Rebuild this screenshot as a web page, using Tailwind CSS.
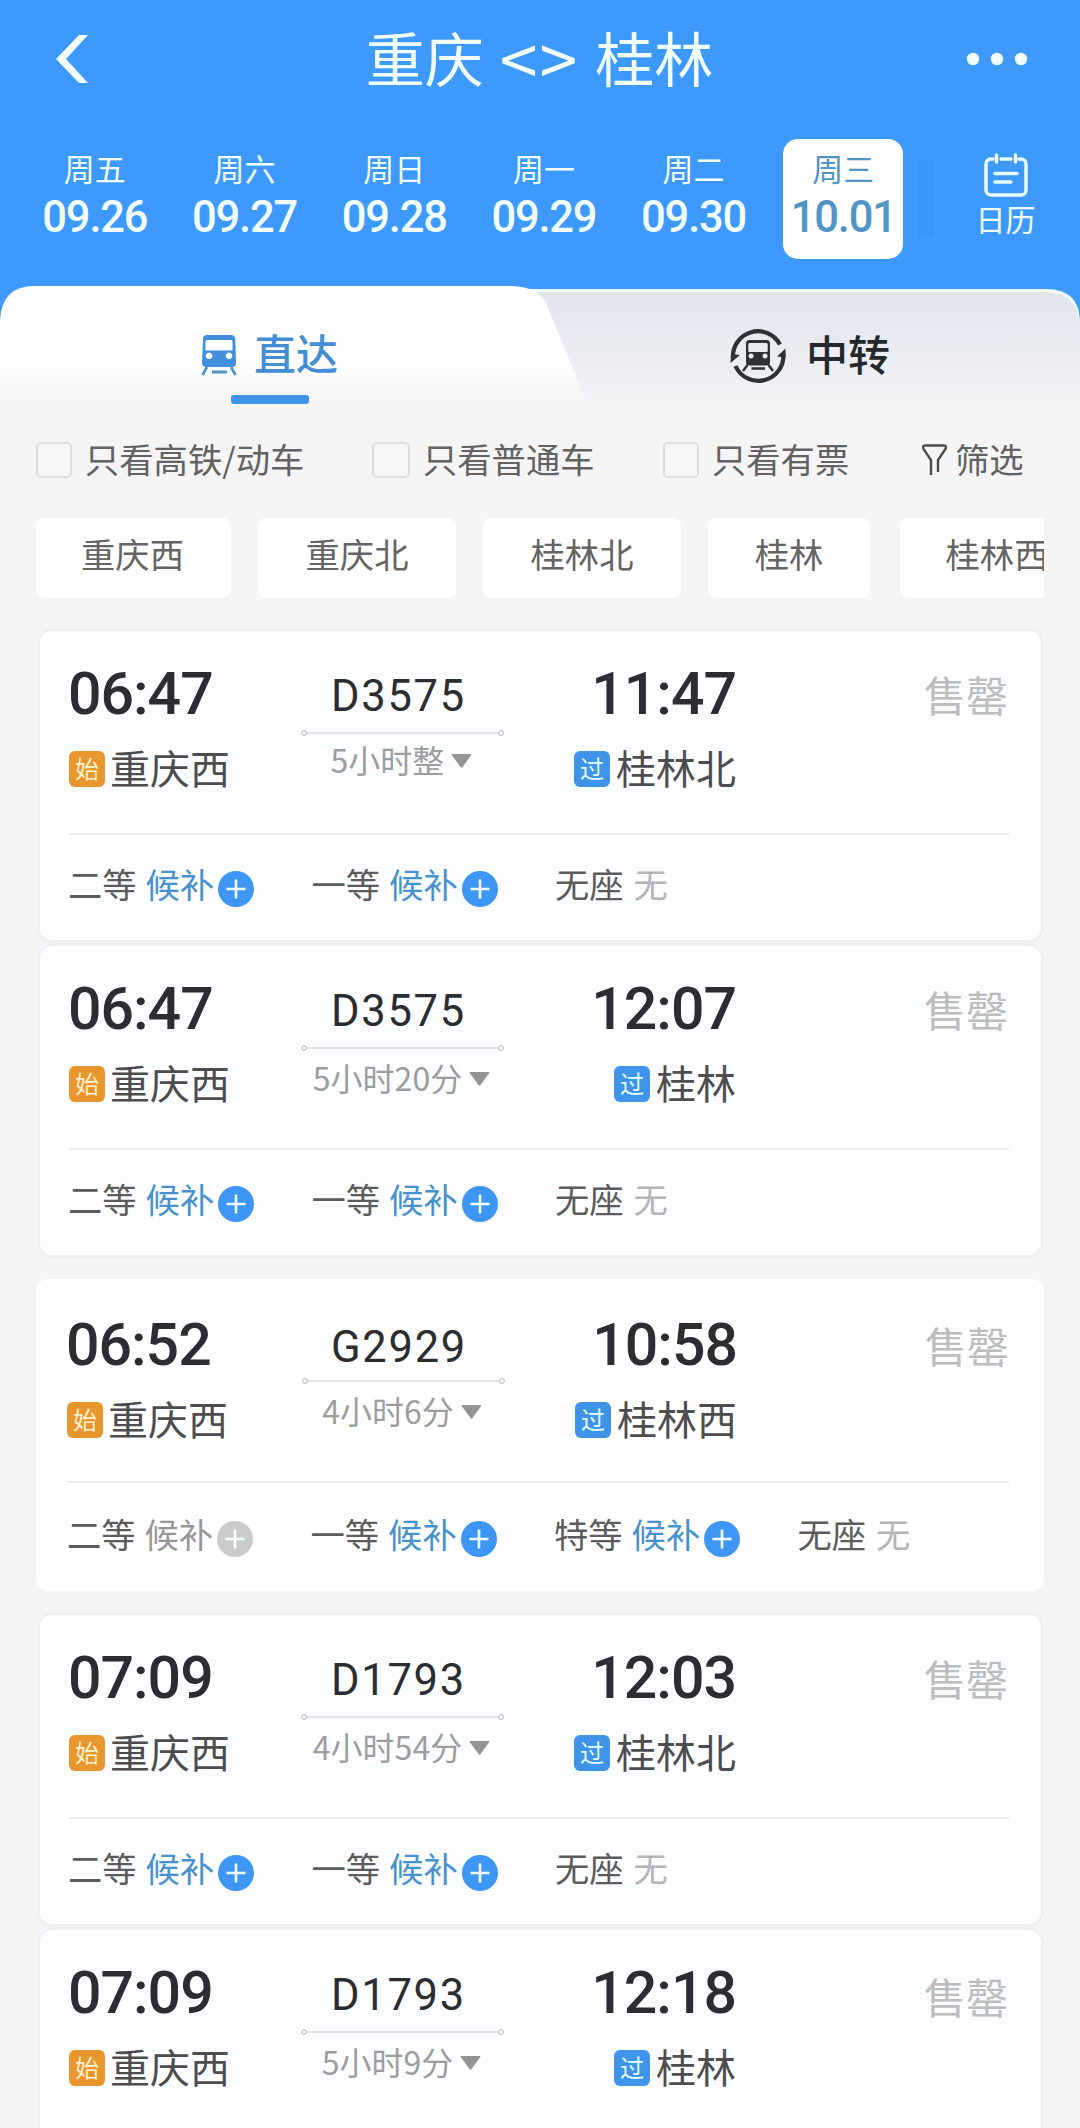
<!DOCTYPE html>
<html lang="zh-CN">
<head>
<meta charset="utf-8">
<title>重庆 - 桂林</title>
<script src="https://cdn.jsdelivr.net/npm/@tailwindcss/browser@4"></script>
</head>
<body class="bg-[#f5f5f6]">
<div class="w-[1080px] h-[2128px] overflow-hidden bg-[#f5f5f6] font-['Noto_Sans_CJK_SC',sans-serif]">
  <header class="h-[286px] bg-[#3d99fc] text-[#f2ffff]">
    <div class="h-[118px] flex items-center justify-between pl-[55px] pr-[52px]">
      <svg class="w-[34px] h-[50px]" viewBox="0 0 34 50" fill="#f4ffff"><path d="M24 1h9L11 25l22 24h-9L1 25z"/></svg>
      <h1 class="flex items-center text-[59px] leading-[59px] pb-[5px] pl-[24px]"><span>重庆</span><span class="px-[16px] text-[68px] leading-[59px] tracking-[2px] font-normal">&lt;&gt;</span><span>桂林</span></h1>
      <svg class="w-[62px] h-[14px]" viewBox="0 0 62 14" fill="#f4ffff"><circle cx="7" cy="7" r="6.2"/><circle cx="31" cy="7" r="6.2"/><circle cx="55" cy="7" r="6.2"/></svg>
    </div>
    <div class="flex pt-[21px]">
      <nav id="days" class="flex w-[918px] pl-[20px]"></nav>
      <div class="w-[16px] h-[78px] mt-[20px] bg-[#3892f5]/50"></div>
      <button class="w-[143px] pt-[14px] flex flex-col items-center">
        <svg class="w-[44px] h-[44px]" viewBox="0 0 44 44" fill="none" stroke="#eaffff" stroke-width="3.4" stroke-linecap="round"><path d="M9 6H7a5 5 0 0 0-5 5v26a5 5 0 0 0 5 5h30a5 5 0 0 0 5-5V11a5 5 0 0 0-5-5h-2M17 6h10M12.500 2v7M31.500 2v7M11 20.500h22M11 29h16"/></svg>
        <span class="mt-[6px] text-[30px] leading-[30px]">日历</span>
      </button>
    </div>
  </header>

  <section class="relative h-[138px]">
    <svg class="absolute inset-0 w-[1080px] h-[138px]" viewBox="0 286 1080 138">
      <defs>
        <linearGradient id="lt" gradientUnits="userSpaceOnUse" x1="0" y1="286" x2="0" y2="404"><stop offset="0.6" stop-color="#fff"/><stop offset="0.95" stop-color="#f5f5f6"/></linearGradient>
        <linearGradient id="rt" gradientUnits="userSpaceOnUse" x1="0" y1="289" x2="0" y2="412"><stop offset="0" stop-color="#e1e5ec"/><stop offset="0.5" stop-color="#e9ecf1"/><stop offset="1" stop-color="#f5f5f6"/></linearGradient>
      </defs>
      <rect x="0" y="286" width="1080" height="40" fill="#3d99fc"/>
      <path d="M500 289h546q34 0 34 34v101H500z" fill="#f3fdff"/>
      <path d="M500 292h546q32 1 34 31v101H500z" fill="url(#rt)"/>
      <path d="M0 424V320Q2 286 34 286H512Q536 287 545 301L585 398V424z" fill="url(#lt)"/>
    </svg>
    <div class="relative grid grid-cols-[540px_540px] text-[42px] leading-[42px]">
      <div class="h-[118px] pl-[201px] pt-[44px] text-[#438ed6]">
        <div class="flex items-center h-[50px] font-medium">
          <svg class="w-[36px] h-[42px] mr-[17px]" viewBox="0 0 36 42"><path fill="#428fe0" fill-rule="evenodd" d="M6 1h24q4 0 4.300 4L35 29q0 4-4 4H5q-4 0-4-4L2 5q0-4 4-4zM6 6q-1.500 0-1.500 2v8.500h27V8q0-2-1.500-2zM8 18.500a3.300 3.300 0 1 0 .1 0zM28 18.500a3.300 3.300 0 1 0 .1 0z"/><path d="M6 33l-4.500 8M30 33l4.500 8M11 38h15" stroke="#5294c8" stroke-width="2.800" fill="none"/></svg>
          <span class="pb-[7px]">直达</span>
        </div>
        <div class="ml-[30px] mt-[15px] w-[78px] h-[9px] rounded-[3px] bg-[#3f93e8]"></div>
      </div>
      <div class="h-[118px] pl-[189px] pt-[41px] text-[#23282c]">
        <div class="flex items-center h-[58px] font-medium">
          <svg class="w-[58px] h-[58px] mr-[18px]" viewBox="0 0 58 58" fill="none" stroke="#2b3134">
            <path stroke-width="4.200" d="M4 31A25 25 0 0 1 51 17.500M54.200 26A25 25 0 0 1 6.500 39"/>
            <path stroke="none" fill="#2b3134" d="M1.500 36L2 27l9 1zM56.500 21.500L48 29.500l8.500 1z"/>
            <path stroke="none" fill="#2b3134" fill-rule="evenodd" d="M20.500 13h17q3.500 0 3.500 3.500V35q0 3.500-3.500 3.500h-17Q17 38.500 17 35V16.500q0-3.500 3.500-3.500zM20.500 16q-1.200 0-1.200 1.500V24q0 1 1.200 1h17q1.200 0 1.200-1v-6.500q0-1.500-1.200-1.500zM22 26.500a2.500 2.500 0 1 0 .1 0zM36 26.500a2.500 2.500 0 1 0 .1 0z"/>
            <path stroke-width="2.400" d="M18.500 38l-4.500 6M39.500 38l4.500 6M22.500 41.500h13.500"/>
          </svg>
          <span class="pb-[7px] pl-[1px]">中转</span>
        </div>
      </div>
    </div>
  </section>

  <section class="h-[94px] pt-[18px] flex text-[34.300px] leading-[36px] text-[#626262]">
    <label class="flex w-[336px] pl-[36px]"><i class="w-[36px] h-[36px] border-[2.500px] border-[#dcdcdc] rounded-[5px] mr-[13px] bg-[#f7f7f7]"></i><span class="-mt-[2px]">只看高铁/动车</span></label>
    <label class="flex w-[290px] pl-[36px]"><i class="w-[38px] h-[36px] border-[2.500px] border-[#dcdcdc] rounded-[5px] mr-[13px] bg-[#f7f7f7]"></i><span class="-mt-[2px]">只看普通车</span></label>
    <label class="flex w-[260px] pl-[37px]"><i class="w-[36px] h-[36px] border-[2.500px] border-[#dcdcdc] rounded-[5px] mr-[13px] bg-[#f7f7f7]"></i><span class="-mt-[2px]">只看有票</span></label>
    <div class="flex pl-[35px]"><svg class="w-[27px] h-[34px] mt-[1px] mr-[7px]" viewBox="0 0 27 34" fill="none" stroke="#4a4a4a" stroke-width="2.400"><path d="M10 32V17L2.500 6Q1 2.500 4 2.500H23Q26 2.500 24.500 6L17 17V29"/></svg><span class="-mt-[2px]">筛选</span></div>
  </section>

  <section class="flex w-[1044px] overflow-hidden pl-[36px] h-[80px] text-[34.300px] leading-[71px] text-[#646464] text-center whitespace-nowrap">
    <div class="shrink-0 w-[195px] pr-[2px] bg-white rounded-[8px] mr-[27px]">重庆西</div>
    <div class="shrink-0 w-[198px] bg-white rounded-[8px] mr-[27px]">重庆北</div>
    <div class="shrink-0 w-[198px] bg-white rounded-[8px] mr-[27px]">桂林北</div>
    <div class="shrink-0 w-[162px] bg-white rounded-[8px] mr-[30px]">桂林</div>
    <div class="shrink-0 w-[194px] bg-white rounded-[8px]">桂林西</div>
  </section>

  <main id="trains" class="pt-[33px]"></main>
</div>
<script>
const days = [['周五','09.26'],['周六','09.27'],['周日','09.28'],['周一','09.29'],['周二','09.30'],['周三','10.01']];
document.getElementById('days').innerHTML = days.map(([w, d], i) => `
  <div class="w-[149.700px] shrink-0 flex justify-center">
    <div class="w-[120px] h-[120px] flex flex-col items-center rounded-[15px] pt-[13px] ${i === 5 ? 'bg-white text-[#4f95c6]' : ''}">
      <span class="text-[31px] leading-[32px]">${w}</span>
      <span class="mt-[12px] text-[43.500px] leading-[44px] font-[Roboto] tracking-[-1.200px] font-medium">${d}</span>
    </div>
  </div>`).join('');

const plus = on => `<svg class="w-[36px] h-[36px] ml-[4px] mt-[5px]" viewBox="0 0 36 36"><circle cx="18" cy="18" r="18" fill="${on ? '#3d96f3' : '#cbcbcb'}"/><path d="M18 8.500v19M8.500 18h19" stroke="#f2ffff" stroke-width="2.600"/></svg>`;
const seat = ([name, state]) => `
  <div class="w-[243.500px] shrink-0 flex text-[34.300px] leading-[34px]">
    <span class="text-[#5c5c5c]">${name}</span>
    ${state === 'none' ? '<span class="ml-[10px] text-[#b5b5b5]">无</span>'
      : `<span class="ml-[9px] ${state === 'on' ? 'text-[#4792cc]' : 'text-[#979797]'}">候补</span>${plus(state === 'on')}`}
  </div>`;
const tinted = { box: 'mx-[40px] w-[1001px] h-[309px] pl-[29px] bg-[#fcfdff] shadow-[0_0_0_2.500px_#f0f0f2]', top: 'h-[204px] w-[940px]', side: 'pt-[34px]', mid: 'w-[203px] pt-[41px]', line: 'mt-[14px]', row: 'mt-[29px]', arr: 'w-[232px]', sold: 'pt-[42px] pr-[1px]', foot: 'pt-[31px] -ml-[1px]' };
const plain = { box: 'mx-[36px] w-[1008px] h-[312px] pl-[31px] bg-white', top: 'h-[204px] w-[942px]', side: 'pt-[37px]', mid: 'w-[207px] pl-[1px] pt-[44px]', line: 'mt-[11px]', row: 'mt-[29px]', arr: 'w-[231px]', sold: 'pt-[45px]', foot: 'pt-[33px]' };
const std = [['二等','on'],['一等','on'],['无座','none']];
const trains = [
  { ...tinted, gap: 'mb-[6px]', dep: '06:47', arrive: '11:47', no: 'D3575', dur: '5小时整', to: '桂林北', drop: 'pt-[10px]', seats: std },
  { ...tinted, gap: 'mb-[24px]', dep: '06:47', arrive: '12:07', no: 'D3575', dur: '5小时20分', to: '桂林', drop: 'pt-[13px]', seats: std },
  { ...plain, gap: 'mb-[24px]', dep: '06:52', arrive: '10:58', no: 'G2929', dur: '4小时6分', to: '桂林西', drop: 'pt-[13px]', seats: [['二等','off'],['一等','on'],['特等','on'],['无座','none']] },
  { ...tinted, gap: 'mb-[6px]', dep: '07:09', arrive: '12:03', no: 'D1793', dur: '4小时54分', to: '桂林北', drop: 'pt-[13px]', seats: std },
  { ...tinted, gap: '', dep: '07:09', arrive: '12:18', no: 'D1793', dur: '5小时9分', to: '桂林', drop: 'pt-[13px]', seats: std, sold: 'pt-[45px] pr-[1px]' }
];
document.getElementById('trains').innerHTML = trains.map(t => `
  <article class="rounded-[12px] ${t.box} ${t.gap}">
    <div class="flex ${t.top} border-b-2 border-[#eaebed] text-[#2c2d30]">
      <div class="w-[232px] ${t.side}">
        <div class="text-[59px] leading-[57px] font-[Roboto] tracking-[-1px] -ml-[1px] font-medium">${t.dep}</div>
        <div class="${t.row} flex items-center h-[36px]">
          <span class="w-[36px] h-[36px] rounded-[6px] bg-[#ea962f] text-[#fff3cf] text-[24px] leading-[33px] text-center">始</span>
          <span class="ml-[5px] pb-[4px] text-[40px] leading-[40px] text-[#4d4d4f]">重庆西</span>
        </div>
      </div>
      <div class="${t.mid} flex flex-col items-center">
        <div class="h-[44px] pr-[8px] text-[43.500px] leading-[50px] font-[Roboto] tracking-[1.700px]">${t.no}</div>
        <svg class="w-[203px] h-[6px] ${t.line}" viewBox="0 0 203 6" fill="none" stroke="#c4c6c9" stroke-width="1.200"><circle cx="3" cy="3" r="2.300"/><circle cx="200" cy="3" r="2.300"/><path d="M5.500 3h192"/></svg>
        <div class="flex items-start pr-[2px] ${t.drop} text-[#9c9d9e]">
          <span class="text-[32px] leading-[26px]">${t.dur}</span>
          <svg class="w-[21px] h-[14px] ml-[7px] mt-[8px]" viewBox="0 0 21 14" fill="#939495"><path d="M1.500 0h18q1.500 0 .6 1.300L11.500 13q-1 1.300-2 0L.9 1.300Q0 0 1.500 0z"/></svg>
        </div>
      </div>
      <div class="${t.arr} ${t.side} flex flex-col items-end">
        <div class="text-[59px] leading-[57px] font-[Roboto] tracking-[-1px] font-medium">${t.arrive}</div>
        <div class="${t.row} flex items-center h-[36px]">
          <span class="w-[36px] h-[36px] rounded-[6px] bg-[#3f94ea] text-[#e4ffff] text-[24px] leading-[33px] text-center">过</span>
          <span class="ml-[6px] pb-[4px] text-[40px] leading-[40px] text-[#4d4d4f]">${t.to}</span>
        </div>
      </div>
      <div class="flex-1 text-right ${t.sold} text-[42px] leading-[42px] text-[#bcbdbe]">售罄</div>
    </div>
    <div class="flex ${t.foot}">${t.seats.map(seat).join('')}</div>
  </article>`).join('');
</script>
</body>
</html>
